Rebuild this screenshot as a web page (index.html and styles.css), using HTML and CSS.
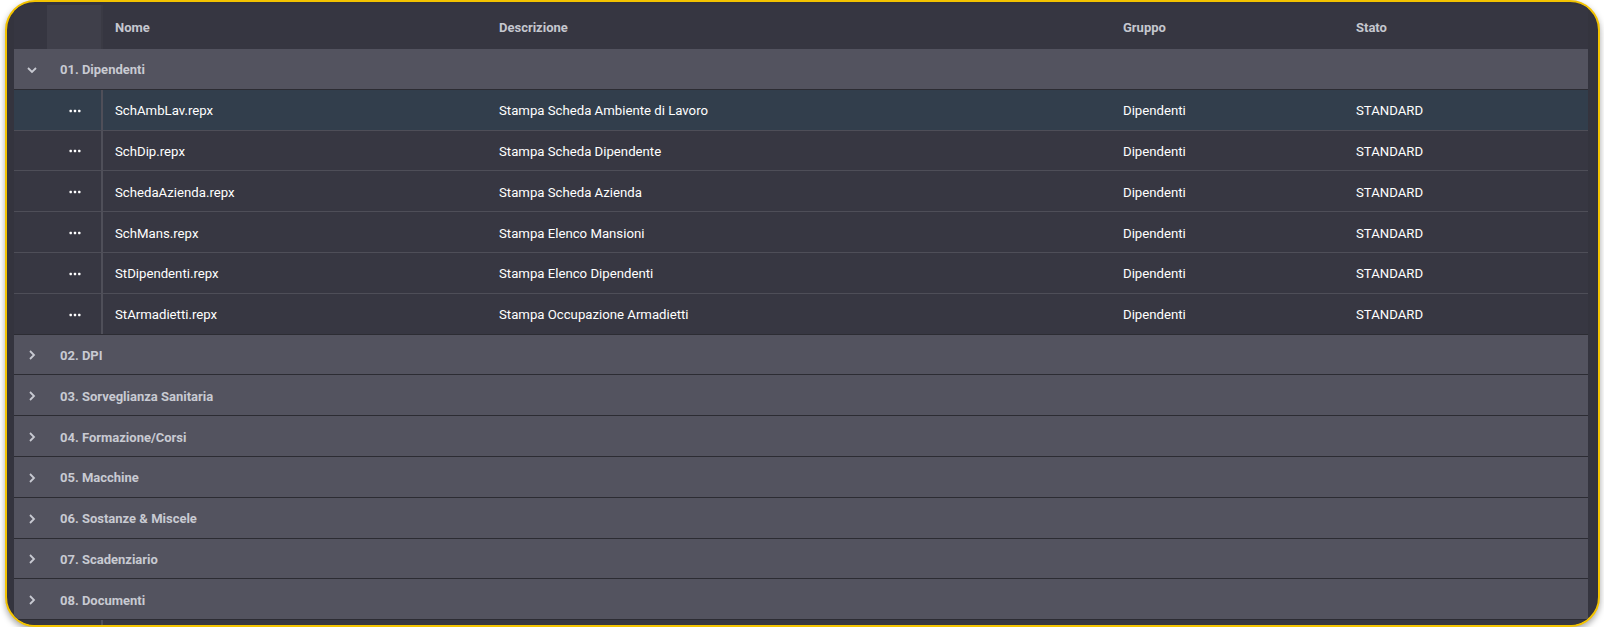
FILE: index.html
```html
<!DOCTYPE html>
<html lang="it">
<head>
<meta charset="utf-8">
<title>Report</title>
<link rel="stylesheet" href="styles.css">
</head>
<body>
<div class="card">
  <div class="grid">
    <div class="row header">
      <div class="cell c-exp"></div>
      <div class="cell c-cmd"></div>
      <div class="cell">Nome</div>
      <div class="cell">Descrizione</div>
      <div class="cell">Gruppo</div>
      <div class="cell">Stato</div>
    </div>

    <div class="group">
      <span class="chev"><svg width="10" height="10" viewBox="0 0 10 10"><path d="M1 3 L5 7 L9 3" fill="none" stroke="currentColor" stroke-width="1.8"/></svg></span>
      <span class="gtext">01. Dipendenti</span>
    </div>

    <div class="row data selected">
      <div class="cell c-exp"></div>
      <div class="cell c-cmd"><svg class="dots" width="12" height="4" viewBox="0 0 12 4"><rect x="0.5" y="0.8" width="2.4" height="2.4" rx="0.6"/><rect x="4.8" y="0.8" width="2.4" height="2.4" rx="0.6"/><rect x="9.1" y="0.8" width="2.4" height="2.4" rx="0.6"/></svg></div>
      <div class="cell">SchAmbLav.repx</div>
      <div class="cell">Stampa Scheda Ambiente di Lavoro</div>
      <div class="cell">Dipendenti</div>
      <div class="cell">STANDARD</div>
    </div>
    <div class="row data">
      <div class="cell c-exp"></div>
      <div class="cell c-cmd"><svg class="dots" width="12" height="4" viewBox="0 0 12 4"><rect x="0.5" y="0.8" width="2.4" height="2.4" rx="0.6"/><rect x="4.8" y="0.8" width="2.4" height="2.4" rx="0.6"/><rect x="9.1" y="0.8" width="2.4" height="2.4" rx="0.6"/></svg></div>
      <div class="cell">SchDip.repx</div>
      <div class="cell">Stampa Scheda Dipendente</div>
      <div class="cell">Dipendenti</div>
      <div class="cell">STANDARD</div>
    </div>
    <div class="row data">
      <div class="cell c-exp"></div>
      <div class="cell c-cmd"><svg class="dots" width="12" height="4" viewBox="0 0 12 4"><rect x="0.5" y="0.8" width="2.4" height="2.4" rx="0.6"/><rect x="4.8" y="0.8" width="2.4" height="2.4" rx="0.6"/><rect x="9.1" y="0.8" width="2.4" height="2.4" rx="0.6"/></svg></div>
      <div class="cell">SchedaAzienda.repx</div>
      <div class="cell">Stampa Scheda Azienda</div>
      <div class="cell">Dipendenti</div>
      <div class="cell">STANDARD</div>
    </div>
    <div class="row data">
      <div class="cell c-exp"></div>
      <div class="cell c-cmd"><svg class="dots" width="12" height="4" viewBox="0 0 12 4"><rect x="0.5" y="0.8" width="2.4" height="2.4" rx="0.6"/><rect x="4.8" y="0.8" width="2.4" height="2.4" rx="0.6"/><rect x="9.1" y="0.8" width="2.4" height="2.4" rx="0.6"/></svg></div>
      <div class="cell">SchMans.repx</div>
      <div class="cell">Stampa Elenco Mansioni</div>
      <div class="cell">Dipendenti</div>
      <div class="cell">STANDARD</div>
    </div>
    <div class="row data">
      <div class="cell c-exp"></div>
      <div class="cell c-cmd"><svg class="dots" width="12" height="4" viewBox="0 0 12 4"><rect x="0.5" y="0.8" width="2.4" height="2.4" rx="0.6"/><rect x="4.8" y="0.8" width="2.4" height="2.4" rx="0.6"/><rect x="9.1" y="0.8" width="2.4" height="2.4" rx="0.6"/></svg></div>
      <div class="cell">StDipendenti.repx</div>
      <div class="cell">Stampa Elenco Dipendenti</div>
      <div class="cell">Dipendenti</div>
      <div class="cell">STANDARD</div>
    </div>
    <div class="row data last">
      <div class="cell c-exp"></div>
      <div class="cell c-cmd"><svg class="dots" width="12" height="4" viewBox="0 0 12 4"><rect x="0.5" y="0.8" width="2.4" height="2.4" rx="0.6"/><rect x="4.8" y="0.8" width="2.4" height="2.4" rx="0.6"/><rect x="9.1" y="0.8" width="2.4" height="2.4" rx="0.6"/></svg></div>
      <div class="cell">StArmadietti.repx</div>
      <div class="cell">Stampa Occupazione Armadietti</div>
      <div class="cell">Dipendenti</div>
      <div class="cell">STANDARD</div>
    </div>

    <div class="group">
      <span class="chev"><svg width="10" height="10" viewBox="0 0 10 10"><path d="M3 1 L7 5 L3 9" fill="none" stroke="currentColor" stroke-width="1.8"/></svg></span>
      <span class="gtext">02. DPI</span>
    </div>
    <div class="group">
      <span class="chev"><svg width="10" height="10" viewBox="0 0 10 10"><path d="M3 1 L7 5 L3 9" fill="none" stroke="currentColor" stroke-width="1.8"/></svg></span>
      <span class="gtext">03. Sorveglianza Sanitaria</span>
    </div>
    <div class="group">
      <span class="chev"><svg width="10" height="10" viewBox="0 0 10 10"><path d="M3 1 L7 5 L3 9" fill="none" stroke="currentColor" stroke-width="1.8"/></svg></span>
      <span class="gtext">04. Formazione/Corsi</span>
    </div>
    <div class="group">
      <span class="chev"><svg width="10" height="10" viewBox="0 0 10 10"><path d="M3 1 L7 5 L3 9" fill="none" stroke="currentColor" stroke-width="1.8"/></svg></span>
      <span class="gtext">05. Macchine</span>
    </div>
    <div class="group">
      <span class="chev"><svg width="10" height="10" viewBox="0 0 10 10"><path d="M3 1 L7 5 L3 9" fill="none" stroke="currentColor" stroke-width="1.8"/></svg></span>
      <span class="gtext">06. Sostanze &amp; Miscele</span>
    </div>
    <div class="group">
      <span class="chev"><svg width="10" height="10" viewBox="0 0 10 10"><path d="M3 1 L7 5 L3 9" fill="none" stroke="currentColor" stroke-width="1.8"/></svg></span>
      <span class="gtext">07. Scadenziario</span>
    </div>
    <div class="group">
      <span class="chev"><svg width="10" height="10" viewBox="0 0 10 10"><path d="M3 1 L7 5 L3 9" fill="none" stroke="currentColor" stroke-width="1.8"/></svg></span>
      <span class="gtext">08. Documenti</span>
    </div>

    <div class="row filler">
      <div class="cell c-exp"></div>
      <div class="cell c-cmd"></div>
      <div class="cell"></div>
      <div class="cell"></div>
      <div class="cell"></div>
      <div class="cell"></div>
    </div>
  </div>
</div>
</body>
</html>
```

FILE: styles.css
```css
html, body {
  margin: 0;
  padding: 0;
  background: #ffffff;
}

body {
  font-family: Roboto, "Liberation Sans", Arial, sans-serif;
  padding: 0 4px 0 5px;
}

.card {
  box-sizing: border-box;
  height: 627px;
  background: #34343e;
  border: 2px solid #f3c300;
  border-radius: 30px;
  overflow: hidden;
  padding: 3px 10px 0 7px;
  box-shadow: 0 3px 6px rgba(0, 0, 0, 0.35);
}

.grid {
  display: flex;
  flex-direction: column;
}

.row {
  display: grid;
  grid-template-columns: 33px 56px 384px 624px 233px 1fr;
  align-items: stretch;
}

.cell {
  display: flex;
  align-items: center;
  padding-left: 12px;
  white-space: nowrap;
  overflow: hidden;
}

.c-exp {
  padding: 0;
}

.c-cmd {
  padding: 0;
  justify-content: center;
  border-right: 2px solid #4f4f59;
}

.header {
  height: 44px;
  flex: none;
  background: #363641;
  color: #c5c7cf;
  font-size: 13px;
  font-weight: 700;
}

.header .c-cmd {
  background: #3f3f4a;
  border-right-color: #3a3a44;
}

.data {
  box-sizing: border-box;
  height: 40.8px;
  flex: none;
  background: #373742;
  color: #ffffff;
  font-size: 13.2px;
  border-bottom: 1px solid #4e4e58;
}

.data .cell {
  padding-top: 2px;
}

.data.last {
  border-bottom-color: #2c2c33;
}

.data.selected {
  background: #323e4c;
}

.dots {
  fill: #ffffff;
  margin-left: 1px;
}

.group {
  box-sizing: border-box;
  height: 40.8px;
  flex: none;
  display: flex;
  align-items: center;
  padding-top: 2px;
  background: #53535f;
  border-bottom: 1px solid #2c2c33;
  color: #c8cad2;
  font-size: 13px;
  font-weight: 700;
}

.chev {
  width: 10px;
  height: 10px;
  margin-left: 13px;
  display: flex;
  color: #c8cad2;
}

.gtext {
  margin-left: 23px;
}

.filler {
  height: 30px;
  flex: none;
  background: #373742;
}
```
